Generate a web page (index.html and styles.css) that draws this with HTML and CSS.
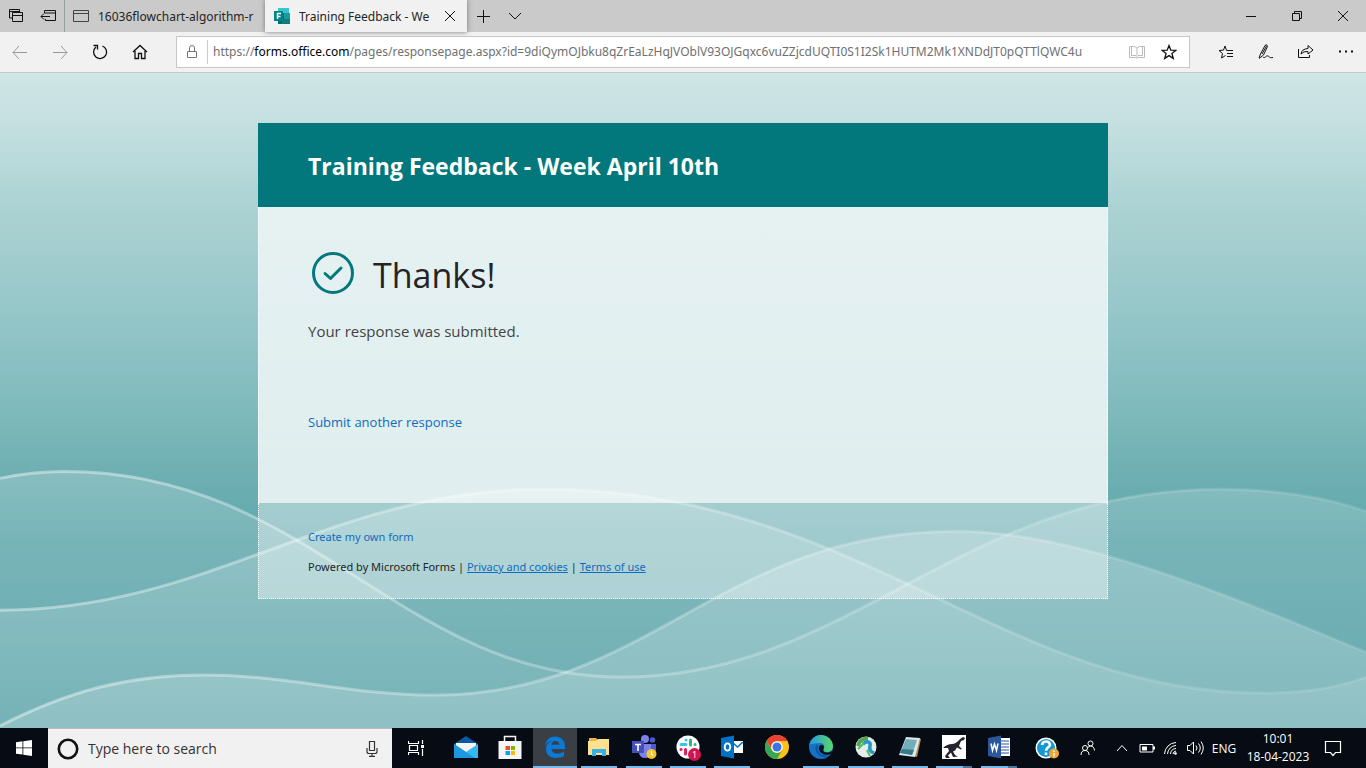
FILE: index.html
```html
<!DOCTYPE html>
<html lang="en">
<head>
<meta charset="utf-8">
<title>Training Feedback - Week April 10th</title>
<link rel="stylesheet" href="styles.css">
</head>
<body>
<header class="browser">
  <div class="tabs">
    <button class="tab-tool" aria-label="Tabs you've set aside"><svg width="16" height="16" viewBox="0 0 16 16"><path d="M4 10H1.500V1.500H11.500V4M1.500 3.500h10M4.500 12.500V4.500H14.500V13.500H4.500zM4.500 7.500h10"/></svg></button>
    <button class="tab-tool" aria-label="Set these tabs aside"><svg width="16" height="16" viewBox="0 0 16 16"><path d="M4.500 5V2.500H15.500V12.500H5.500V11M4.500 5h11M1 8.500h9M4 5.500l-3 3 3 3"/></svg></button>
    <button class="tab tab-back"><svg width="16" height="16" viewBox="0 0 16 16"><path d="M.5 2.500h15v11H.5zM.5 5.500h15"/></svg><span>16036flowchart-algorithm-r</span></button>
    <div class="tab tab-front">
      <svg class="solid" width="16" height="16" viewBox="0 0 16 16"><path fill="#37c6d0" d="M4 0h11v5H4z"/><path fill="#1a9ba1" d="M8 5h8v6H8z"/><path fill="#036c70" d="M4 5h6v11H4z"/><path fill="#107c80" d="M8 11h8v5H8z"/><path fill="#038387" d="M0 3h9v10H0z"/><path d="M3.500 11V5.500H7M3.500 8.500h3" fill="none" stroke="#fff" stroke-width="1.400"/></svg>
      <span>Training Feedback - We</span>
      <button class="close" aria-label="Close tab"><svg width="12" height="12" viewBox="0 0 12 12"><path d="M1 1l10 10M11 1L1 11"/></svg></button>
    </div>
    <button class="tab-tool" aria-label="New tab"><svg width="14" height="14" viewBox="0 0 14 14"><path d="M7.500 1v13M1 7.500h13"/></svg></button>
    <button class="tab-tool" aria-label="Tab previews"><svg width="14" height="14" viewBox="0 0 14 14"><path d="M1 4l6 6 6-6"/></svg></button>
    <div class="window-tools">
      <button aria-label="Minimize"><svg width="12" height="12" viewBox="0 0 12 12"><path d="M1 6.500h10"/></svg></button>
      <button aria-label="Restore"><svg width="12" height="12" viewBox="0 0 12 12"><path d="M1.500 3.500h7v7h-7zM3.500 3.500v-2h7v7h-2"/></svg></button>
      <button aria-label="Close"><svg width="12" height="12" viewBox="0 0 12 12"><path d="M1 1l10 10M11 1L1 11"/></svg></button>
    </div>
  </div>
  <div class="toolbar">
    <button class="nav off" aria-label="Back"><svg width="16" height="16" viewBox="0 0 16 16"><path d="M1 8.500h14M7 2L1 8.500 7 15"/></svg></button>
    <button class="nav off" aria-label="Forward"><svg width="16" height="16" viewBox="0 0 16 16"><path d="M1 8.500h14M9 2l6 6.500L9 15"/></svg></button>
    <button class="nav" aria-label="Refresh"><svg width="16" height="16" viewBox="0 0 16 16"><path d="M10.500 2A6.500 6.500 0 1 1 4 3M1.500 1.500h4v4" stroke-width="1.300"/></svg></button>
    <button class="nav" aria-label="Home"><svg width="16" height="16" viewBox="0 0 16 16"><path d="M1 8l7-6.500L15 8M3 7v7.500h3.500V9.500h3v5H13V7" stroke-width="1.300"/></svg></button>
    <div class="address">
      <svg class="lock" width="12" height="16" viewBox="0 0 12 16"><path d="M1.500 7.500h9v6h-9zM3.500 7.500V4a2.500 2.500 0 0 1 5 0v3.500"/></svg>
      <div class="url">https://<b>forms.office.com</b>/pages/responsepage.aspx?id=9diQymOJbku8qZrEaLzHqJVOblV93OJGqxc6vuZZjcdUQTI0S1I2Sk1HUTM2Mk1XNDdJT0pQTTlQWC4u</div>
      <button class="book" aria-label="Reading view"><svg width="16" height="16" viewBox="0 0 16 16"><path d="M.5 2.500h5L8 4l2.500-1.500h5v11H9L8 14.500 7 13.500H.5zM8 4v10M2.500 2.500v9H7M13.500 2.500v9H9"/></svg></button>
      <button class="star" aria-label="Add to favorites"><svg width="16" height="16" viewBox="0 0 16 16"><path stroke-width="1.300" d="M8 1.500l1.800 4.700 5 .2-3.900 3.100 1.400 4.900L8 11.600l-4.300 2.800 1.400-4.900L1.200 6.400l5-.2z"/></svg></button>
    </div>
    <button class="nav" aria-label="Favorites hub"><svg width="16" height="16" viewBox="0 0 16 16"><path d="M7.500 11.500L3.500 14l1-4.500L1 6.500l4.500-.4L7 2l1.600 4.500H15M9 9.500h6M9 12.500h6"/></svg></button>
    <button class="nav" aria-label="Add notes"><svg width="16" height="16" viewBox="0 0 16 16"><path d="M1 14l1.500-4L7 1.500Q9-.5 9.500 2.500L5.500 11 1 14.500M8.500 2L4 10M5 13c2 2 3-2 5-1s1 2 5 1.500"/></svg></button>
    <button class="nav" aria-label="Share"><svg width="16" height="16" viewBox="0 0 16 16"><path d="M.5 5v8.500h11V11M3 10q.5-5 7-5.500V1.500L15 6l-5 4V7.500Q5.500 7 3 10z"/></svg></button>
    <button class="nav" aria-label="Settings and more"><svg width="16" height="16" viewBox="0 0 16 16"><path d="M1 7.500h2M7 7.500h2M13 7.500h2" stroke-width="2"/></svg></button>
  </div>
</header>

<main class="page">
  <svg class="waves" viewBox="0 72 1366 656" preserveAspectRatio="none" aria-hidden="true">
    <defs>
      <linearGradient id="fill-a" gradientUnits="userSpaceOnUse" x1="0" y1="471" x2="0" y2="728"><stop offset="0" stop-color="#fff" stop-opacity=".18"/><stop offset="1" stop-color="#fff" stop-opacity=".04"/></linearGradient>
      <linearGradient id="fill-b" gradientUnits="userSpaceOnUse" x1="0" y1="489" x2="0" y2="728"><stop offset="0" stop-color="#fff" stop-opacity=".2"/><stop offset="1" stop-color="#fff" stop-opacity=".1"/></linearGradient>
      <linearGradient id="fill-c" gradientUnits="userSpaceOnUse" x1="0" y1="531" x2="0" y2="728"><stop offset="0" stop-color="#fff" stop-opacity=".22"/><stop offset="1" stop-color="#fff" stop-opacity=".18"/></linearGradient>
      <linearGradient id="line" gradientUnits="userSpaceOnUse" x1="0" y1="0" x2="1366" y2="0"><stop offset="0" stop-color="#fff" stop-opacity=".42"/><stop offset="1" stop-color="#fff" stop-opacity=".1"/></linearGradient>
    </defs>
    <path fill="url(#fill-a)" d="M0 478C22 473 43 471 65 471C310 471 400 677 622 677C850 677 960 489 1220 489C1275 489 1325 496 1366 511V728H0z"/>
    <path fill="url(#fill-b)" d="M0 610C210 610 330 489 542 489C860 489 1000 693 1262 693C1305 693 1340 687 1366 677V728H0z"/>
    <path fill="url(#fill-c)" d="M0 726C70 690 130 675 204 675C290 675 350 695 434 695C650 695 720 531 956 531C1080 531 1240 600 1366 652V728H0z"/>
    <g fill="none" stroke="url(#line)" stroke-width="3">
      <path d="M0 478C22 473 43 471 65 471C310 471 400 677 622 677C850 677 960 489 1220 489C1275 489 1325 496 1366 511"/>
      <path d="M0 610C210 610 330 489 542 489C860 489 1000 693 1262 693C1305 693 1340 687 1366 677"/>
      <path d="M0 726C70 690 130 675 204 675C290 675 350 695 434 695C650 695 720 531 956 531C1080 531 1240 600 1366 652"/>
    </g>
  </svg>
  <article class="card">
    <h1 class="card-title">Training Feedback - Week April 10th</h1>
    <section class="card-body">
      <h2 class="thanks"><svg width="50" height="50" viewBox="0 0 50 50"><circle cx="25" cy="25" r="19.500" stroke-width="3"/><path d="M17 25.500l5.500 5L33 20" stroke-width="3" stroke-linecap="round" stroke-linejoin="round"/></svg><span>Thanks!</span></h2>
      <p class="message">Your response was submitted.</p>
      <a class="again" href="#">Submit another response</a>
    </section>
    <footer class="card-footer">
      <a class="create" href="#">Create my own form</a>
      <p>Powered by Microsoft Forms | <a href="#">Privacy and cookies</a> | <a href="#">Terms of use</a></p>
    </footer>
  </article>
</main>

<footer class="taskbar">
  <button class="start" aria-label="Start"><svg width="16" height="16" viewBox="0 0 16 16"><path fill="#fff" d="M0 2.200L6.500 1.300V7.500H0zM7.300 1.200L16 0v7.500H7.300zM0 8.300h6.500v6.300L0 13.700zM7.300 8.300H16V16l-8.700-1.300z"/></svg></button>
  <label class="search">
    <svg width="22" height="22" viewBox="0 0 22 22"><circle cx="11" cy="11" r="9.200" fill="none" stroke="#111" stroke-width="2.600"/></svg>
    <input type="text" placeholder="Type here to search" aria-label="Type here to search">
    <svg width="12" height="18" viewBox="0 0 12 18"><path fill="none" stroke="#333" stroke-width="1.200" d="M3.500 1.500h5v9h-5zM1 8v3.500q0 2 2 2h6q2 0 2-2V8M6 13.500V16M3 16.400h6"/></svg>
  </label>
  <button class="task-view" aria-label="Task View"><svg width="16" height="16" viewBox="0 0 16 16"><path fill="none" stroke="#fff" stroke-width="1.200" d="M.5 1v2.500h10V1M1.500 5.500h8v5h-8zM.5 15v-2.500h10V15M14.500 0v4M14.500 9v7"/><path fill="#fff" d="M13 5h3v3h-3z"/></svg></button>
  <nav class="apps" aria-label="Apps">
    <button class="app" aria-label="Mail"><svg width="24" height="24" viewBox="0 0 24 24"><path fill="#0c59a4" d="M0 9l12-8 12 8v3H0z"/><path fill="#f5f5f5" d="M2 8h20v5l-10 5-10-5z"/><path fill="#35b8f1" d="M24 9v14H0V9l12 8z"/><path fill="#1b98e0" d="M0 9l21 14H0z"/></svg></button>
    <button class="app" aria-label="Store"><svg width="24" height="24" viewBox="0 0 24 24"><path fill="none" stroke="#f5f5f5" stroke-width="1.500" d="M6.500 7V1.500h11V7"/><path fill="#f5f5f5" d="M.5 6h23v18H.5z"/><path fill="#f25022" d="M7.500 11H12v4H7.500z"/><path fill="#7fba00" d="M13 11h4v4h-4z"/><path fill="#00a4ef" d="M7.500 16H12v4H7.500z"/><path fill="#ffb900" d="M13 16h4v4h-4z"/></svg></button>
    <button class="app current" aria-label="Microsoft Edge Legacy"><svg width="24" height="24" viewBox="0 0 24 24"><path fill="#0a7ad8" d="M2 11C3 4.500 7 1.500 12 1.500c6 0 10 4 10 10V14H8.500c.2 3 2.500 4.500 5.500 4.500 2.500 0 5-.6 7-1.800V21c-2 1.200-5 1.900-8 1.900-6 0-10-3.500-10-8.900 0-4 2.500-7 6-8.500C5 6.500 3 8.500 2 11zm6.500-1.200h7.800c0-2.300-1.500-3.800-3.800-3.800-2.200 0-3.700 1.500-4 3.800z"/></svg></button>
    <button class="app open" aria-label="File Explorer"><svg width="24" height="24" viewBox="0 0 24 24"><path fill="#e8b64a" d="M2 3h7l2 2h11v5H2z"/><path fill="#ffe08f" d="M1 6h8l2-2h11v16H1z"/><path fill="#35b1e8" d="M5 21v-7h14v7h-4v-3H9v3z"/></svg></button>
    <button class="app open" aria-label="Teams"><svg width="26" height="24" viewBox="0 0 26 24"><circle cx="14" cy="4" r="4" fill="#7b83eb"/><circle cx="21.500" cy="5" r="2.800" fill="#5059c9"/><path fill="#5059c9" d="M17 9h8v7q-1 4-5 4z"/><path fill="#7b83eb" d="M8 9h12v9q-1 5-6 5t-6-5z"/><path fill="#464eb8" d="M1 6h12v12H1z"/><path d="M4 9.500h6M7 9.500V16" stroke="#fff" stroke-width="1.600"/><circle cx="20.500" cy="19" r="5" fill="#f8c62c"/><path d="M20.500 16v3l1.500 1.500" fill="none" stroke="#fff" stroke-width="1.200"/></svg></button>
    <button class="app open" aria-label="Slack, 1 notification"><svg width="24" height="24" viewBox="0 0 24 24"><circle cx="12" cy="12" r="11.500" fill="#fff"/><g fill="none" stroke-width="3" stroke-linecap="round"><path stroke="#36c5f0" d="M5 9.500h5M10 5v.1"/><path stroke="#2eb67d" d="M14.500 5v5M19 9.500h.1"/><path stroke="#e01e5a" d="M5 14.500h.1M9.500 14.500v4.500"/></g></svg><span class="count">1</span></button>
    <button class="app open" aria-label="Outlook"><svg width="24" height="24" viewBox="0 0 24 24"><path fill="#fff" d="M12 6h11v12H12z"/><path fill="none" stroke="#0072c6" stroke-width="1.600" d="M13 8l4.500 4L23 7"/><path fill="#0072c6" d="M1 3l13-2.500v23L1 21z"/><ellipse cx="7.500" cy="12" rx="2.800" ry="3.600" fill="none" stroke="#fff" stroke-width="1.900"/></svg></button>
    <button class="app" aria-label="Chrome"><svg width="24" height="24" viewBox="0 0 24 24"><circle cx="12" cy="12" r="12" fill="#fbc116"/><path fill="#ea4335" d="M1.600 6A12 12 0 0 1 22.400 6H12a6 6 0 0 0-5.500 8z"/><path fill="#34a853" d="M1.600 6A12 12 0 0 0 12 24l5.200-9A6 6 0 0 1 6.800 15z"/><circle cx="12" cy="12" r="5.800" fill="#fff"/><circle cx="12" cy="12" r="4.500" fill="#3974e8"/></svg></button>
    <button class="app open" aria-label="Microsoft Edge"><svg width="24" height="24" viewBox="0 0 24 24"><defs><linearGradient id="edge-top"><stop stop-color="#2596e4"/><stop offset="1" stop-color="#5bd965"/></linearGradient></defs><circle cx="12" cy="12" r="12" fill="#1672c4"/><path fill="url(#edge-top)" d="M.2 10A12 12 0 0 1 24 11c0 4-3 6-6 6-4 0-4-2-3-4 1-3-1-5-4-5-5 0-9 1-10.800 2z"/><path fill="#0c59a4" d="M8 9c-4 5 0 12 6 13 3 .5 5-.5 6.500-2-5 2-12-1-11.500-7z"/><path fill="#0c1017" d="M12 10c3 0 3.500 2 2.500 4s.5 3.500 3.500 3.500c2 0 4-.6 5.500-2L22 19c-5 2-11 0-12-5-.3-2 .5-3.500 2-4z"/></svg></button>
    <button class="app open" aria-label="VPN client"><svg width="24" height="24" viewBox="0 0 24 24"><circle cx="12" cy="12" r="10.500" fill="#e4eee8"/><path fill="none" stroke="#51a848" stroke-width="4" d="M4 11c1-5 5-8 10-7"/><path fill="none" stroke="#2597c9" stroke-width="3.500" d="M9 9c4-4 8-2 7 2s1 6 4 7"/><path fill="none" stroke="#54b96a" stroke-width="2" d="M4 14l6-6M13 15l3 6"/></svg></button>
    <button class="app open" aria-label="Notepad"><svg width="24" height="24" viewBox="0 0 24 24"><path fill="#b68c4c" d="M20 3l3 1-4 18-4-1z"/><path fill="#dce9ea" d="M8 2l14 1-5 19-16-2z"/><path fill="#73aeb9" d="M8 4l11 1-5 15-12-2z"/><path fill="#347b88" d="M4 14l12 1-2 5-12-2z"/></svg></button>
    <button class="app open split" aria-label="Dinosaur"><svg width="24" height="24" viewBox="0 0 24 24"><path fill="#fff" d="M0 0h24v24H0z"/><path fill="#28222c" d="M1 13q4-4 9-4 4 0 8-5l3-2 2 1-1 2-3 1-2 5 3 3-1 .5-4-2-2 3-2 1 2 3.500 3 1.500-5 .5-2-4.500-3 3 2 2.500H4l-1-2 4-5-1-3z"/></svg></button>
    <button class="app open split" aria-label="Word"><svg width="24" height="24" viewBox="0 0 24 24"><path fill="#fff" d="M12 3h11v18H12z"/><path stroke="#2b579a" stroke-width="1.200" d="M14 6h8M14 9h8M14 12h8M14 15h8M14 18h8"/><path fill="#2b579a" d="M1 3l13-2.500v23L1 21z"/><path fill="none" stroke="#fff" stroke-width="1.500" d="M4 8.500l1.500 7 2-6.500 2 6.500 1.500-7"/></svg></button>
  </nav>
  <div class="tray">
    <button class="help" aria-label="Get help"><svg width="24" height="24" viewBox="0 0 24 24"><circle cx="11" cy="12" r="10.500" fill="#fff"/><circle cx="11" cy="12" r="9" fill="#1597d5"/><path fill="none" stroke="#fff" stroke-width="2.600" d="M7 9q.5-3.500 4-3.500t4 3.200c0 2.500-4 2.800-4 6M11 16.500v2.500"/><circle cx="19" cy="17.500" r="5" fill="#f3a72c"/><path d="M19 14.500v1.500M19 17v3.500" stroke="#fff" stroke-width="1.500"/></svg></button>
    <button class="people" aria-label="People"><svg width="16" height="16" viewBox="0 0 16 16"><circle cx="5" cy="8" r="2.500"/><circle cx="10.500" cy="3.500" r="2.500"/><path d="M1 15q0-4.500 4-4.500T9 15M7.500 8q1-2 3-2 3.500 0 4 4.500"/></svg></button>
    <button class="more" aria-label="Show hidden icons"><svg width="12" height="8" viewBox="0 0 12 8"><path d="M1 7l5-5.500L11 7"/></svg></button>
    <button class="status" aria-label="Battery"><svg width="16" height="16" viewBox="0 0 16 16"><path d="M1 4.500h13v7.500H1z"/><path fill="#fff" stroke="none" d="M3 6.500h5v4H3zM14 6.500h2v3h-2z"/></svg></button>
    <button class="status" aria-label="Network"><svg width="16" height="16" viewBox="0 0 16 16"><path d="M1.500 14A12 12 0 0 1 13 2.500M4.500 14A9 9 0 0 1 13 5.500M7.500 14A6 6 0 0 1 13 8.500M10 14A3.500 3.500 0 0 1 13 11"/><circle cx="12.500" cy="13.500" r="1.300" fill="#fff" stroke="none"/></svg></button>
    <button class="status" aria-label="Volume"><svg width="18" height="16" viewBox="0 0 18 16"><path d="M1.500 5.500h2.500L7.500 2v12L4 10.500H1.500zM10 5.500q2 2.500 0 5M12.500 3.500q3.500 4.500 0 9M15 1.500q4.500 6.500 0 13"/></svg></button>
    <button class="lang">ENG</button>
    <button class="clock"><span>10:01</span><span>18-04-2023</span></button>
    <button class="notes" aria-label="Action center"><svg width="18" height="18" viewBox="0 0 18 18"><path stroke-width="1.200" d="M1.500 2.500h15v11h-5L9 16.500l-2.500-3h-5z"/></svg></button>
  </div>
</footer>
</body>
</html>
```
FILE: styles.css
```css
* { box-sizing: border-box; }
body {
  margin: 0;
  min-height: 100vh;
  display: flex;
  flex-direction: column;
  font-family: "Open Sans", "Noto Sans", sans-serif;
  color: #242424;
}
button {
  border: 0;
  padding: 0;
  background: none;
  color: inherit;
  font: inherit;
  display: flex;
  align-items: center;
  justify-content: center;
  flex: none;
}
svg { display: block; flex: none; }
h1, h2, p { margin: 0; font-weight: 400; }

.browser { background: #f1f1f1; border-bottom: 1px solid #c8c8c8; font-family: "Noto Sans", sans-serif; }
.browser svg { fill: none; stroke: #111; }
.browser .solid { stroke: none; }
.tabs { display: flex; height: 32px; background: #cacaca; font-size: 12px; }
.tab-tool { width: 32px; }
.tab { display: flex; align-items: center; gap: 9px; padding: 0 8px; overflow: hidden; white-space: nowrap; }
.tab-back { width: 201px; border-left: 1px solid #969fa0; justify-content: flex-start; }
.tab-back svg { stroke: #444; }
.tab span { flex: 1; min-width: 0; overflow: hidden; text-align: left; }
.tab-front { width: 202px; background: #f1f1f1; box-shadow: 0 0 5px #777; padding: 0 11px 0 9px; }
.window-tools { display: flex; margin-left: auto; }
.window-tools button { width: 46px; }
.toolbar { display: flex; height: 40px; align-items: center; }
.nav { width: 40px; height: 40px; }
.off svg { stroke: #999; }
.address {
  flex: 1;
  min-width: 0;
  display: flex;
  align-items: center;
  height: 32px;
  margin: 0 16px;
  border: 1px solid #c6c6c6;
  background: #fff;
}
.lock { margin: 0 9px; }
.browser .lock { stroke: #777; }
.url { flex: 1; min-width: 0; padding-left: 5px; border-left: 1px solid #ccc; font-size: 12px; line-height: 24px; color: #707070; white-space: nowrap; overflow: hidden; }
.url b { font-weight: 400; color: #000; }
.book, .star { width: 32px; height: 30px; }
.book svg { stroke: #bbb; }
.star { margin-right: 4px; }

.page {
  position: relative;
  flex: 1;
  padding: 50px 24px;
  background: linear-gradient(#cfe5e6, #c7e0e1 7%, #b0d5d6 18%, #9fcbcc 30%, #90c4c7 40%, #80babc 51%, #70b0b3 60%, #67acb0 66%, #61a8ad 71%, #5fa6ab);
}
.waves { position: absolute; inset: 0; width: 100%; height: 100%; }
.card { position: relative; max-width: 850px; margin: 0 auto; }
.card-title { padding: 27px 50px 25px; background: #03787c; color: #fff; font-size: 23px; font-weight: 700; line-height: 32px; }
.card-body {
  height: 296px;
  padding: 40px 49px 0;
  border: 1px dotted #fff;
  border-width: 0 1px;
  background: linear-gradient(rgba(255, 255, 255, .7), rgba(255, 255, 255, .8));
}
.thanks { display: flex; align-items: center; gap: 15px; font-size: 34px; line-height: 52px; }
.thanks svg { fill: none; stroke: #03787c; }
.thanks span { padding-top: 4px; line-height: 48px; }
.message { margin-top: 20px; font-size: 15px; line-height: 24px; color: #444; }
a { color: #0f6cbd; }
.again { display: inline-block; margin-top: 68px; font-size: 13px; line-height: 22px; text-decoration: none; }
.card-footer { padding: 24px 49px 21px; border: 1px dotted #fff; border-top: 0; background: rgba(255, 255, 255, .4); font: 11px/20px "Noto Sans", sans-serif; }
.create { display: inline-block; text-decoration: none; margin-bottom: 10px; }

.taskbar { display: flex; height: 40px; background: #070c14; color: #fff; }
.start { width: 48px; }
.search { display: flex; align-items: center; gap: 9px; width: 344px; padding: 0 14px 0 9px; background: #f1f1f1; border-top: 1px solid #bbb; }
.search input { flex: 1; min-width: 0; border: 0; padding: 0; background: none; font: 14px "Open Sans", "Noto Sans", sans-serif; }
.search input::placeholder { color: #333; opacity: 1; }
.task-view { width: 48px; }
.apps { display: flex; justify-content: space-between; flex: 0 1 577px; margin-left: 4px; }
.app { position: relative; width: 44px; border-bottom: 2px solid transparent; }
.open::after { content: ""; position: absolute; left: 4px; right: 4px; bottom: -2px; height: 2px; background: #76b9ed; }
.split::after { background: linear-gradient(90deg, #76b9ed 75%, #4b7699 75%); }
.current { background: #3a3f46; border-color: #76b9ed; }
.count { position: absolute; right: 9px; bottom: 5px; width: 13px; border-radius: 50%; background: #d3134b; font-size: 9px; line-height: 13px; }
.tray { display: flex; margin-left: auto; padding-right: 15px; font-size: 12px; }
.tray svg { fill: none; stroke: #fff; stroke-width: 1; }
.tray .help svg { stroke: none; }
.help { width: 40px; }
.people { width: 42px; }
.more { width: 26px; }
.status { width: 24px; }
.lang { width: 34px; }
.clock { width: 74px; flex-direction: column; line-height: 18px; }
.notes { width: 36px; }
```
